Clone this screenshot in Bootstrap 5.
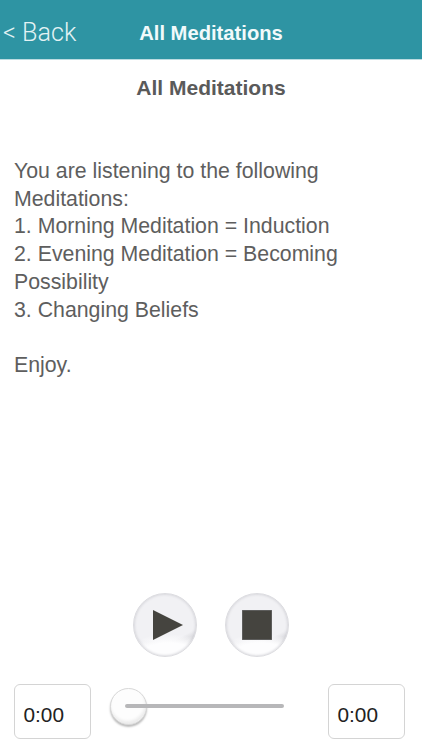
<!DOCTYPE html>
<html lang="en">
<head>
<meta charset="utf-8">
<title>All Meditations</title>
<link href="https://cdn.jsdelivr.net/npm/bootstrap@5.3.0/dist/css/bootstrap.min.css" rel="stylesheet">
<style>
html, body { height: 100%; }
body { font-family: "Liberation Sans", Arial, sans-serif; background: #fff; color: #5c5c5c; overflow: hidden; }
.app-shell { height: 750px; }
.app-bar { height: 60px; background: #2e94a3; border-bottom: 1px solid #bcdce1; padding: 0; flex-wrap: nowrap; position: relative; align-items: flex-start; }
.back-link { position: absolute; left: 3px; top: 16px; font-family: Roboto, "Liberation Sans", sans-serif; font-weight: 300; font-size: 25.2px; line-height: 34px; color: #e3f2f4; text-decoration: none; }
.bar-title { width: 100%; margin: 0; text-align: center; color: #f2fafb; font-size: 20.2px; font-weight: 700; line-height: 28px; padding-top: 19px; }
.page-title { font-size: 21px; font-weight: 700; color: #5a5a5a; line-height: 28px; margin: 14px 0 0; text-align: center; }
.body-copy { font-size: 21.3px; line-height: 27.7px; color: #5e5e5e; margin: 0; padding: 56px 14px 0; flex: 1 1 auto; }
.round-btn { width: 64px; height: 64px; padding: 0; border-radius: 50%; border: 1px solid #dcdce0;
  background:
    radial-gradient(ellipse 46px 22px at 56% 100%, #fdfdfe 0 60%, transparent 100%),
    radial-gradient(ellipse 58px 40px at 38% 24%, #f1f1f4 0 80%, transparent 100%),
    linear-gradient(180deg, #ececf0 0%, #dcdce1 55%, #cfcfd4 66%, #ececef 82%, #fbfbfc 100%);
  box-shadow: inset 0 0 3px #c6c6cc; display: flex; align-items: center; justify-content: center; }
.play-glyph { margin-left: 6px; }
.controls { gap: 28px; margin-bottom: 27px; }
.time-box { width: 77px; height: 55px; flex: 0 0 auto; border: 1px solid #d4d4d4; border-radius: 6px; background: #fff; color: #222; font-size: 20.8px; line-height: 1; padding: 7px 0 0 8.5px; display: flex; align-items: center; }
.bottom-row { padding: 0 17px 11px 14px; }
.slider-wrap { position: relative; flex: 1 1 auto; height: 55px; margin-left: 19px; margin-right: 44px; }
.slider-track { position: absolute; left: 15px; right: 0; top: 20px; height: 4px; border-radius: 2px; background: #b7b7b9; }
.slider-thumb { position: absolute; left: 0; top: 4px; width: 37px; height: 37px; border-radius: 50%; border: 1px solid #d8d8d8; background: #fdfdfd; box-shadow: 0 2px 2px #bdbdbd, inset -1px -3px 3px #ececec; }
</style>
</head>
<body>
<div class="app-shell d-flex flex-column">
  <nav class="navbar app-bar">
    <a class="back-link" href="#">&lt; Back</a>
    <h1 class="bar-title">All Meditations</h1>
  </nav>
  <h2 class="page-title">All Meditations</h2>
  <p class="body-copy">You are listening to the following Meditations:<br>1. Morning Meditation = Induction<br>2. Evening Meditation = Becoming Possibility<br>3. Changing Beliefs<br><br>Enjoy.</p>
  <div class="d-flex justify-content-center controls">
    <button class="btn round-btn" type="button" aria-label="Play">
      <svg class="play-glyph" width="30" height="30" viewBox="0 0 30 30"><path d="M0 0 L30 15 L0 30 Z" fill="#45443f"/></svg>
    </button>
    <button class="btn round-btn" type="button" aria-label="Stop">
      <svg width="30" height="30" viewBox="0 0 30 30"><rect width="30" height="30" fill="#45443f" stroke="#77767a" stroke-width="1"/></svg>
    </button>
  </div>
  <div class="d-flex align-items-start bottom-row">
    <div class="time-box">0:00</div>
    <div class="slider-wrap">
      <div class="slider-thumb"></div>
      <div class="slider-track"></div>
    </div>
    <div class="time-box">0:00</div>
  </div>
</div>
<script src="https://cdn.jsdelivr.net/npm/bootstrap@5.3.0/dist/js/bootstrap.bundle.min.js"></script>
</body>
</html>
